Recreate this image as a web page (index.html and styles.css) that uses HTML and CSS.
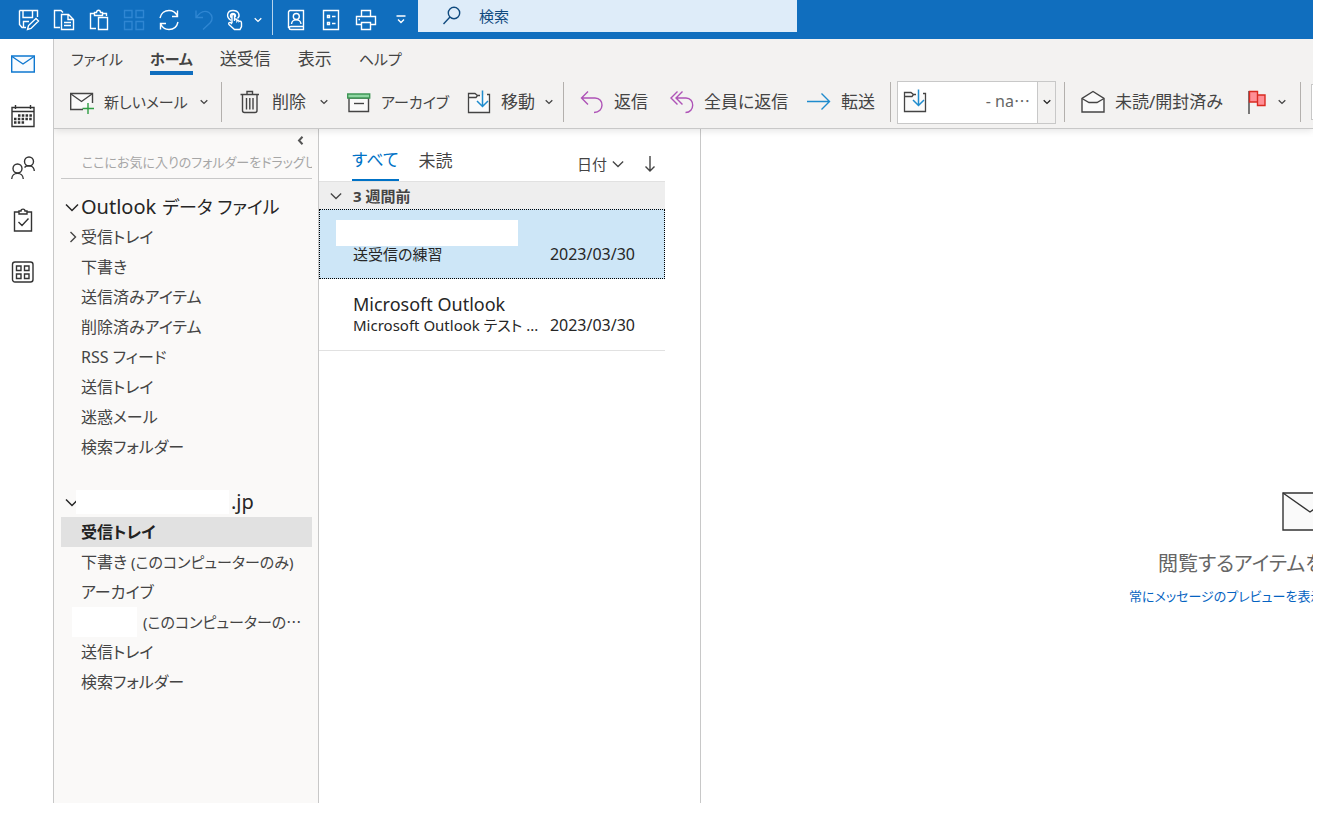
FILE: index.html
```html
<!DOCTYPE html>
<html lang="ja">
<head>
<meta charset="utf-8">
<title>Outlook</title>
<link rel="stylesheet" href="styles.css">
</head>
<body>
<svg class="defs" aria-hidden="true">
  <symbol id="chev" viewBox="0 0 8 6"><path d="M.7 1.2 4 4.4 7.3 1.2" fill="none" stroke="currentColor" stroke-width="1.3"/></symbol>
  <symbol id="chev-lg" viewBox="0 0 14 9"><path d="M1 1.5 7 7.5 13 1.5" fill="none" stroke="currentColor" stroke-width="1.5"/></symbol>
  <symbol id="move" viewBox="0 0 24 24"><path d="M20 4.500H22.500V22.500H1.500V3.500H8L10.500 5.500H13M1.500 7.500H9L10.500 5.500" fill="#fafafa" stroke="#444" stroke-width="1.300"/><path d="M15.500 0.500V16M10 11 15.500 16.500 21 11" fill="none" stroke="#1e8bcd" stroke-width="1.500"/></symbol>
</svg>
<div class="app">
  <header class="titlebar">
    <div class="quick">
      <button aria-label="保存"><svg viewBox="0 0 22 22"><path d="M1.500 1.500H19.500V8M1.500 1.500V15.500L4 18.500H8M5 1.500V8.500H14.500V1.500M5.500 18V12.500H11M9.500 20.500 10.500 16.500 18 9.500 20.500 12 13 19.500Z"/></svg></button>
      <button aria-label="コピー"><svg viewBox="0 0 22 22"><path d="M7 18.500H1.500V1.500H8L10 3.500M8.500 5.500H15.500L20.500 10.500V20.500H8.500ZM15 5.500V10.500H20.500M11 13.500H18M11 16.500H18"/></svg></button>
      <button aria-label="貼り付け"><svg viewBox="0 0 22 22"><path d="M8 19.500H2.500V4.500H6.500M14.500 4.500H18.500V7M6.500 6.500V3.500H8.500C8.500 .500 12.500 .500 12.500 3.500H14.500V6.500ZM10.500 8.500H19.500V20.500H10.500Z"/></svg></button>
      <button aria-label="表示の切り替え" disabled><svg viewBox="0 0 22 22"><path d="M1.500 1.500H9V8.500H1.500ZM13 1.500H20.500V8.500H13ZM1.500 12.500H9V20.500H1.500ZM13 12.500H20.500V20.500H13Z"/></svg></button>
      <button aria-label="すべて送受信"><svg viewBox="0 0 22 22"><path d="M2 9C3 4 7 1.500 11 1.500 15 1.500 18 4 19.500 7M19.500 1.500V7.500H14M20 13C19 17.500 15.500 20.500 11 20.500 7 20.500 4 18 2.500 14.500M2.500 20.500V14.500H8"/></svg></button>
      <button aria-label="元に戻す" disabled><svg viewBox="0 0 22 22"><path d="M3 1.500V8.500H10M3 8.500C7 2.500 12 1 16 3.500 20 6.500 20 11 17 14L10 20.500"/></svg></button>
      <button class="touch" aria-label="タッチ/マウス モードの切り替え"><svg viewBox="0 0 22 22"><path d="M6 11.500C.500 8 2 1.500 8 1.500 14 1.500 15.500 7 12.500 9.500M6.500 9C4.500 7 5.500 4.500 8 4.500 10.500 4.500 11.500 7 9.500 8.500M7 14V6.500C7 5 9.500 5 9.500 6.500V12 10.500C11 9.500 12 10 12 12 13 10.500 14 11.500 14 12.500 15.500 11.500 16.500 12.500 16.500 14V17.500L15 20.500H9.500L4 15.500C3 14 4.500 13 5.500 13.500L7 15"/></svg></button>
      <button class="narrow" aria-label="モード メニュー"><svg class="chev"><use href="#chev"/></svg></button>
      <span class="bar"></span>
      <button aria-label="アドレス帳"><svg viewBox="0 0 22 22"><path d="M4.500 1.500H18.500V17.500H6C3.500 17.500 3.500 20.500 6 20.500H18.500V17.500M3.500 19V3L4.500 1.500M6.500 15C7 9.500 15.500 9.500 16 15"/><circle cx="11.300" cy="7.500" r="3"/></svg></button>
      <button aria-label="ルール"><svg viewBox="0 0 22 22"><path d="M3.500 1.500H18.500V20.500H3.500ZM7.500 6.500H9.500V8.500H7.500ZM7.500 13.500H9.500V15.500H7.500ZM12 7.500H15.500M12 14.500H15.500"/></svg></button>
      <button aria-label="印刷"><svg viewBox="0 0 22 22"><path d="M6.500 7V1.500H15.500V7M6 15.500H1.500V7.500H20.500V15.500H16M6.500 13.500H15.500V20.500H6.500ZM3.500 10.500H5"/></svg></button>
      <button aria-label="クイック アクセス ツール バーのユーザー設定"><svg class="more" viewBox="0 0 10 9"><path d="M.500 1H9.500M2 4.500 5 7.500 8 4.500"/></svg></button>
    </div>
    <label class="search"><svg viewBox="0 0 20 20"><circle cx="12" cy="7" r="5.700"/><path d="M8 11 1.500 18"/></svg><input type="text" placeholder="検索" aria-label="検索"></label>
  </header>
  <div class="body">
    <nav class="rail">
      <button aria-label="メール" class="on"><svg viewBox="0 0 24 24"><path d="M.700 4H23.300V20H.700Z" fill="#f7fbff"/><path d="M1 4.500 12 12 23 4.500"/></svg></button>
      <button aria-label="予定表"><svg viewBox="0 0 24 24"><path d="M1 3.500H23V22.500H1ZM1 7.500H23M4.500 1V5M19.500 1V5"/><path d="M7 11.500H21M3 15H21M3 18.500H14" stroke-width="2.500" stroke-dasharray="2.500 1.300"/></svg></button>
      <button aria-label="連絡先"><svg viewBox="0 0 24 24"><circle cx="6.500" cy="12.500" r="4.500"/><circle cx="18" cy="5.500" r="4.500"/><path d="M.700 23C1 15.500 12 15.500 12.300 23M13.500 11.500C16 8.500 23 9 23.300 15"/></svg></button>
      <button aria-label="タスク"><svg viewBox="0 0 24 24"><path d="M8 4H3.500V23H20.500V4H16M8 6V3H10C10 .500 14 .500 14 3H16V6ZM7.500 14 11 17.500 17.500 10.500"/></svg></button>
      <button aria-label="その他のアプリ"><svg viewBox="0 0 24 24"><rect x="1.500" y="2" width="20.500" height="20" rx="2.500"/><path d="M5.500 6H10V10.500H5.500ZM13.500 6H18V10.500H13.500ZM5.500 14H10V18.500H5.500ZM13.500 14H18V18.500H13.500Z"/></svg></button>
    </nav>
    <div class="main">
      <div class="ribbon">
        <nav class="tabs">
          <button class="kana">ファイル</button><button class="kana on">ホーム</button><button>送受信</button><button>表示</button><button class="kana">ヘルプ</button>
        </nav>
        <div class="tools">
          <button class="tool kana w-new"><svg viewBox="0 0 24 24"><path d="M13 19.500H.700V3.500H22.500V13" fill="#fafafa"/><path d="M1 4 11.500 11.500 22 4"/><path d="M18 13V24M12.500 18.500H24" stroke="#2f9e44"/></svg>新しいメール<svg class="chev"><use href="#chev"/></svg></button>
          <span class="sep"></span>
          <button class="tool w-del"><svg viewBox="0 0 24 24"><path d="M4.500 4.500H19V20.500Q19 22.500 17 22.500H6.500Q4.500 22.500 4.500 20.500ZM2.500 4.500H21M9 4V1.500H14.500V4M8.500 8V19.500M11.800 8V19.500M15 8V19.500"/></svg>削除<svg class="chev"><use href="#chev"/></svg></button>
          <button class="tool kana w-arc"><svg viewBox="0 0 24 24"><path d="M2 8H21.500V21.500H2Z" fill="#fafafa"/><path d="M.700 4H22.700V8H.700Z" fill="#8fd6a2" stroke="#3f9656"/><path d="M7 13.500H17"/></svg>アーカイブ</button>
          <button class="tool w-move"><svg><use href="#move"/></svg>移動<svg class="chev"><use href="#chev"/></svg></button>
          <span class="sep"></span>
          <button class="tool w-rep"><svg class="purple" viewBox="0 0 24 24"><path d="M8 1.500 1.500 8 8 14.500M2 8H15C24.500 8 24.500 22.500 14 22.500"/></svg>返信</button>
          <button class="tool w-all"><svg class="purple" viewBox="0 0 24 24"><path d="M7.500 1.500 1 8 7.500 14.500M12.500 1.500 6 8 12.500 14.500M6.500 8H16C25 8 25 22.500 15.500 22.500"/></svg>全員に返信</button>
          <button class="tool w-fwd"><svg class="blue" viewBox="0 0 24 24"><path d="M0 11.500H22.500M14.500 3.500 22.500 11.500 14.500 19.500"/></svg>転送</button>
          <span class="sep"></span>
          <div class="combo"><button class="pick"><svg><use href="#move"/></svg><span>- na<span class="jp">…</span></span></button><button class="drop" aria-label="クイック操作"><svg class="chev"><use href="#chev"/></svg></button></div>
          <span class="sep"></span>
          <button class="tool w-read"><svg viewBox="0 0 24 24"><path d="M1 22V8.500L12 1.500 23 8.500V22Z" fill="#fafafa"/><path d="M1 8.500 8 12.500H16L23 8.500"/></svg>未読/開封済み</button>
          <button class="tool w-flag" aria-label="フラグ"><svg viewBox="0 0 24 24"><path d="M2 1V24" stroke="#444"/><path d="M2.500 1.500H10.500V12H2.500ZM10.500 5H18V15.500H10.500Z" fill="#ff8f96" stroke="#d92b22"/></svg><svg class="chev"><use href="#chev"/></svg></button>
          <span class="sep"></span>
          <span class="edge"></span>
        </div>
      </div>
      <div class="panes">
        <aside class="folders">
          <button class="collapse" aria-label="フォルダー ウィンドウの最小化"><svg viewBox="0 0 7 9"><path d="M5.500 .700 2 4.500 5.500 8.300"/></svg></button>
          <p class="hint">ここにお気に入りのフォルダーをドラッグしま</p>
          <h2><svg class="chev-lg"><use href="#chev-lg"/></svg>Outlook <span class="kana-lg">データ ファイル</span></h2>
          <ul>
            <li><a href="#"><svg class="right" viewBox="0 0 8 12"><path d="M1.500 1 6.500 6 1.500 11"/></svg>受信トレイ</a></li>
            <li><a href="#">下書き</a></li>
            <li><a href="#">送信済みアイテム</a></li>
            <li><a href="#">削除済みアイテム</a></li>
            <li><a href="#">RSS フィード</a></li>
            <li><a href="#">送信トレイ</a></li>
            <li><a href="#">迷惑メール</a></li>
            <li><a href="#">検索フォルダー</a></li>
          </ul>
          <h2 class="second"><svg class="chev-lg"><use href="#chev-lg"/></svg><span class="mask name"></span>.jp</h2>
          <ul>
            <li><a href="#" class="on">受信トレイ</a></li>
            <li><a href="#">下書き <span class="note">(このコンピューターのみ)</span></a></li>
            <li><a href="#">アーカイブ</a></li>
            <li><a href="#" class="masked"><span class="mask short"></span><span class="note">(このコンピューターの<span class="jp">…</span></span></a></li>
            <li><a href="#">送信トレイ</a></li>
            <li><a href="#">検索フォルダー</a></li>
          </ul>
        </aside>
        <section class="list">
          <div class="filter">
            <button class="on">すべて</button><button>未読</button>
            <button class="sort">日付<svg class="chev-lg"><use href="#chev-lg"/></svg></button>
            <button class="dir" aria-label="並べ替え順序"><svg viewBox="0 0 12 16"><path d="M6 0V15M1.500 10.500 6 15 10.500 10.500"/></svg></button>
          </div>
          <h3><svg class="chev-lg"><use href="#chev-lg"/></svg>3 週間前</h3>
          <article class="msg on">
            <span class="mask from"></span>
            <div class="line"><span>送受信の練習</span><time>2023/03/30</time></div>
          </article>
          <article class="msg">
            <strong>Microsoft Outlook</strong>
            <div class="line"><span>Microsoft Outlook テスト ...</span><time>2023/03/30</time></div>
          </article>
        </section>
        <section class="reading">
          <svg viewBox="0 0 56 40"><path d="M1 1H55V38H1Z" fill="#fafafa"/><path d="M1 1 28 20 55 1"/></svg>
          <p>閲覧するアイテムを</p>
          <a href="#">常にメッセージのプレビューを表示</a>
        </section>
      </div>
    </div>
  </div>
</div>
</body>
</html>
```

FILE: styles.css
```css
* { box-sizing: border-box; }
body { margin: 0; background: #fff; color: #444; font: 400 17px/24px "Noto Sans", "Noto Sans CJK JP", sans-serif; font-feature-settings: "palt"; }
button, input { font: inherit; font-feature-settings: inherit; color: inherit; background: none; border: 0; padding: 0; margin: 0; }
a { color: inherit; text-decoration: none; }
h2, h3, p, ul { margin: 0; padding: 0; list-style: none; }
svg { display: block; flex: none; fill: none; stroke: currentColor; stroke-width: 1.4; }
.defs { position: absolute; width: 0; height: 0; }
.chev { width: 8px; height: 6px; }
.chev-lg { width: 14px; height: 9px; }
.jp { font-family: "Noto Sans CJK JP", sans-serif; }
.kana { font-size: 15px; }
.mask { display: block; flex: none; background: #fff; }

.app { display: flex; flex-direction: column; height: 100vh; padding: 0 4px 27px 0; overflow: hidden; }
.titlebar { display: flex; flex: none; height: 39px; background: #106ebe; color: #fff; }
.quick { display: flex; align-items: center; width: 418px; padding-left: 11px; }
.quick button { display: grid; place-items: center; width: 35px; height: 38px; }
.quick button svg { width: 22px; height: 22px; }
.quick .touch { width: 29px; }
.quick .narrow { width: 15px; }
.quick button .chev { width: 8px; height: 6px; }
.quick button .more { width: 10px; height: 9px; }
.quick button:disabled { color: #2f86d2; }
.quick .bar { width: 1px; height: 35px; margin: 0 5px 4px 7px; background: #b7d4ec; }
.search { display: flex; align-items: center; gap: 17px; width: 379px; height: 32px; padding-left: 24px; background: #deecf9; color: #104a7e; font-size: 15px; }
.search svg { width: 20px; height: 20px; }
.search input { flex: 1; min-width: 0; outline: 0; }
.search input::placeholder { color: #104a7e; opacity: 1; }

.body { display: flex; flex: 1; min-height: 0; }
.rail { display: flex; flex-direction: column; gap: 28px; width: 53px; padding: 13px 0 0 11px; color: #333; }
.rail button { width: 24px; height: 24px; }
.rail svg { width: 24px; height: 24px; }
.rail .on { color: #0f78d0; }
.main { display: flex; flex-direction: column; flex: 1; min-width: 0; border-left: 1px solid #c8c8c8; }

.ribbon { z-index: 1; flex: none; height: 90px; background: #f3f2f1; border-bottom: 1px solid #c8c8c8; box-shadow: 0 2px 7px rgba(0, 0, 0, .1); clip-path: inset(0 0 -12px 0); }
.tabs { display: flex; gap: 27px; height: 43px; padding: 7px 0 0 17px; }
.tabs button { height: 29px; padding-bottom: 4px; white-space: nowrap; }
.tabs .on { font-weight: 700; border-bottom: 4px solid #106ebe; padding-bottom: 0; }
.tools { display: flex; align-items: center; height: 40px; overflow-x: clip; }
.tool { display: flex; flex: none; align-items: center; gap: 10px; height: 40px; padding-left: 16px; white-space: nowrap; }
.tool svg, .pick svg { width: 24px; height: 24px; }
.tool .chev { width: 8px; height: 6px; margin-left: auto; }
.sep { flex: none; width: 1px; height: 40px; background: #b3b0ad; }
.w-new { width: 167px; padding-right: 13px; }
.w-del { width: 109px; padding-right: 3px; }
.w-arc { width: 120px; }
.w-move { width: 112px; padding-right: 13px; }
.w-rep { width: 90px; }
.w-all { width: 137px; }
.w-fwd { width: 99px; }
.w-read { width: 166px; }
.w-flag { width: 69px; padding-right: 18px; }
.tool.w-new, .tool.w-flag { gap: 7px; }
.tool.w-new > svg:first-child { margin-right: 3px; }
.purple { color: #ae53b7; }
.blue { color: #1e8bcd; }
.combo { display: flex; flex: none; width: 159px; height: 43px; margin: 0 8px 0 6px; background: #fff; border: 1px solid #c8c8c8; }
.pick { display: flex; flex: 1; align-items: center; justify-content: space-between; padding: 0 7px 3px 5px; font-size: 16px; color: #666; }
.drop { display: grid; place-items: center; width: 18px; background: #f3f2f1; border-left: 1px solid #c8c8c8; color: #222; }
.edge { flex: none; width: 20px; height: 36px; margin-left: 10px; background: #fff; border: 1px solid #c8c8c8; }

.panes { display: flex; flex: 1; min-height: 0; }
.folders { flex: none; width: 265px; padding: 7px 6px 0 7px; background: #faf9f8; border-right: 1px solid #c8c8c8; font-size: 16px; white-space: nowrap; }
.collapse { display: block; margin-left: auto; padding-right: 8px; color: #555; }
.collapse svg { width: 7px; height: 9px; stroke-width: 2; }
.hint { height: 34px; padding: 5px 0 0 21px; overflow: hidden; border-bottom: 1px solid #c8c8c8; color: #a6a6a6; font-size: 13px; }
.folders h2 { display: flex; align-items: center; gap: 2px; height: 30px; margin-top: 13px; padding-left: 4px; color: #262626; font-size: 20px; font-weight: 400; }
.kana-lg { margin-left: 4px; font-size: 18px; }
.folders .second { margin-top: 25px; }
.folders .name { width: 153px; height: 24px; margin-left: -5px; }
.folders li a { display: flex; align-items: center; gap: 4px; height: 30px; padding-left: 20px; }
.folders .right { width: 8px; height: 12px; margin-left: -12px; }
.folders li .on { background: #e1e1e1; color: #222; font-weight: 700; }
.folders li .masked { padding-left: 11px; gap: 6px; }
.folders .short { width: 65px; height: 30px; }
.note { font-size: 15px; }

.list { flex: none; width: 382px; padding-right: 35px; border-right: 1px solid #c8c8c8; }
.filter { display: flex; align-items: center; gap: 20px; height: 53px; padding: 11px 9px 0 33px; border-bottom: 1px solid #e1e1e1; }
.filter button { height: 41px; white-space: nowrap; }
.filter .on { color: #0072c6; border-bottom: 2px solid #0072c6; }
.filter .sort { display: flex; align-items: center; gap: 5px; margin-left: auto; padding-top: 6px; font-size: 15px; }
.filter .sort svg { width: 12px; height: 8px; }
.filter .dir { padding-top: 6px; }
.filter .dir svg { width: 12px; height: 16px; }
.list h3 { display: flex; align-items: center; gap: 11px; height: 27px; padding-left: 11px; background: #eee; font-size: 15px; font-weight: 700; }
.list h3 svg { width: 12px; height: 8px; }
.msg { height: 72px; padding: 14px 30px 0 34px; border-bottom: 1px solid #e1e1e1; color: #262626; font-size: 15px; line-height: 20px; }
.msg.on { height: 70px; padding: 10px 29px 0 33px; background: #cde6f7; border: 1px dotted #000; }
.msg strong { display: block; font-size: 18px; font-weight: 400; line-height: 22px; }
.line { display: flex; justify-content: space-between; white-space: nowrap; }
.line time { font-size: 16px; }
.from { width: 182px; height: 26px; margin: 0 0 -2px -17px; }
.reading { display: flex; flex: 1; flex-direction: column; min-width: 0; padding: 363px 0 0 428px; overflow: hidden; white-space: nowrap; }
.reading svg { width: 56px; height: 40px; margin-left: 153px; color: #333; }
.reading p { margin: 18px 0 0 29px; color: #666; font-size: 20px; line-height: 28px; }
.reading a { margin-top: 6px; color: #0563c1; font-size: 13px; line-height: 24px; }
```
